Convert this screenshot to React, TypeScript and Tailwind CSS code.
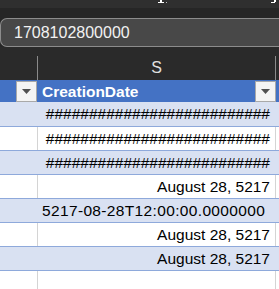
import React from "react";

const font = { fontFamily: '"Liberation Sans", Arial, sans-serif' };

type Row = { value: string; align: "left" | "right"; band: boolean };

const rows: Row[] = [
  { value: "##########################", align: "right", band: true },
  { value: "##########################", align: "right", band: false },
  { value: "##########################", align: "right", band: true },
  { value: "August 28, 5217", align: "right", band: false },
  { value: "5217-08-28T12:00:00.0000000", align: "left", band: true },
  { value: "August 28, 5217", align: "right", band: false },
  { value: "August 28, 5217", align: "right", band: true },
  { value: "", align: "right", band: false },
];

function FilterButton() {
  return (
    <div className="flex h-[21px] w-[21px] items-center justify-center border border-[#a9a9a9] bg-[#f4f4f4]">
      <svg width="9" height="5" viewBox="0 0 9 5">
        <path d="M0 0h9L4.5 5z" fill="#505050" />
      </svg>
    </div>
  );
}

export default function App() {
  return (
    <div className="h-[289px] w-[279px] overflow-hidden bg-white" style={font}>
      {/* cut-off ribbon strip: only the bottoms of two glyphs show */}
      <div className="relative h-[8px] overflow-hidden bg-[#2f2f2f]">
        <div className="absolute left-[160px] top-0 h-[3px] w-[2px] bg-white" />
        <div className="absolute left-[158px] top-[2px] h-[1px] w-[6px] bg-white" />
        <div className="absolute left-[166px] top-[2px] h-[1px] w-[1px] bg-[#bbbbbb]" />
        <div className="absolute left-[274px] top-0 h-[2px] w-[2px] bg-white" />
        <div className="absolute left-[271px] top-[2px] h-[1px] w-[4px] bg-white" />
      </div>

      {/* formula bar */}
      <div className="h-[39px] bg-[#262626] pt-[10px]">
        <div className="flex h-[29px] items-center rounded-l-[7px] border border-r-0 border-[#8c8c8c] bg-[#484848] pl-[13px] text-[16px] text-[#f2f2f2]">
          1708102800000
        </div>
      </div>

      {/* column headers */}
      <div className="h-[33px] bg-[#2a2a2a] pt-[9px]">
        <div className="flex h-[24px]">
          <div className="w-[38px] shrink-0 border-r border-[#8a8a8a]" />
          <div className="flex w-[238px] shrink-0 items-center justify-center border-r border-[#8a8a8a] text-[16px] text-[#e0e0e0]">
            S
          </div>
        </div>
      </div>

      {/* table header */}
      <div className="flex h-[22px] items-start bg-[#4472c4] pt-px">
        <div className="flex w-[38px] shrink-0 justify-end pr-px">
          <FilterButton />
        </div>
        <div className="flex w-[238px] shrink-0 items-center justify-between pl-[4px]">
          <span className="text-[15.5px] font-bold leading-[21px] text-white">CreationDate</span>
          <FilterButton />
        </div>
      </div>

      {/* table rows */}
      {rows.map((r, i) => (
        <div
          key={i}
          className={`flex border-b border-[#8ea9db] ${i === 0 ? "h-[25px]" : "h-[24px]"} ${
            r.band ? "bg-[#d9e1f2]" : "bg-white"
          }`}
        >
          <div className={`w-[38px] shrink-0 border-r ${r.band ? "border-[#d9e1f2]" : "border-[#d4d4d4]"}`} />
          <div
            className={`flex w-[238px] shrink-0 items-center overflow-hidden whitespace-nowrap border-r text-[15.5px] text-black ${
              r.band ? "border-[#d9e1f2]" : "border-[#d4d4d4]"
            } ${r.align === "right" ? "justify-end pr-[5px]" : "justify-start pl-[4px] tracking-[0.35px]"}`}
          >
            {r.value}
          </div>
        </div>
      ))}
    </div>
  );
}
